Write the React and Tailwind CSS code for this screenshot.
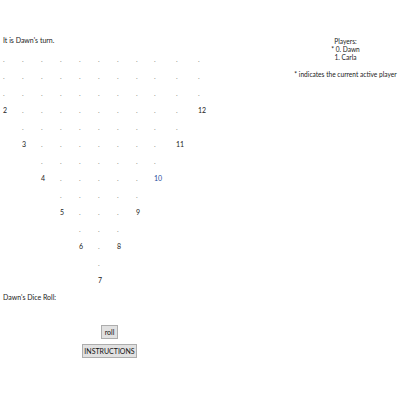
import React from "react";

const COLS = 11;
const rows = [
  { dots: [0, 10] },
  { dots: [0, 10] },
  { dots: [0, 10] },
  { left: [0, "2"], dots: [1, 9], right: [10, "12"] },
  { dots: [1, 9] },
  { left: [1, "3"], dots: [2, 8], right: [9, "11"] },
  { dots: [2, 8] },
  { left: [2, "4"], dots: [3, 7], right: [8, "10", true] },
  { dots: [3, 7] },
  { left: [3, "5"], dots: [4, 6], right: [7, "9"] },
  { dots: [4, 6] },
  { left: [4, "6"], dots: [5, 5], right: [6, "8"] },
  { dots: [5, 5] },
  { left: [5, "7"] },
];

function Row({ r }) {
  const cells = [];
  for (let c = 0; c < COLS; c++) {
    let content = null;
    if (r.left && r.left[0] === c) {
      content = <span className="text-[#222]">{r.left[1]}</span>;
    } else if (r.right && r.right[0] === c) {
      content = (
        <span className={r.right[2] ? "text-[#1f4e9c]" : "text-[#222]"}>
          {r.right[1]}
        </span>
      );
    } else if (r.dots && c >= r.dots[0] && c <= r.dots[1]) {
      content = <span className="text-[#888]">.</span>;
    }
    cells.push(
      <div key={c} className="h-[17px] flex items-center">
        {content}
      </div>
    );
  }
  return <>{cells}</>;
}

export default function App() {
  return (
    <div className="flex bg-white font-['Lato',sans-serif] text-[7px] leading-[8px] text-[#222] w-[400px] h-[400px]">
      <div className="w-[215px] pl-[3px] pt-[36px]">
        <div>It is Dawn's turn.</div>
        <div className="mt-[6px] grid grid-cols-[19px_19px_19px_19px_19px_19px_19px_18px_22px_22px_16px]">
          {rows.map((r, i) => (
            <Row key={i} r={r} />
          ))}
        </div>
        <div className="mt-[5px]">Dawn's Dice Roll:</div>
        <div className="mt-[24px] flex flex-col items-center gap-[5px] pl-[1px]">
          <button className="h-[14px] px-[3px] bg-[#e1e1e1] border border-[#adadad] text-[7px] leading-[8px] text-[#111]">
            roll
          </button>
          <button className="h-[14px] px-[1px] bg-[#e1e1e1] border border-[#adadad] text-[7px] leading-[8px] text-[#111]">
            INSTRUCTIONS
          </button>
        </div>
      </div>
      <div className="flex-1 pt-[37px] flex justify-center pl-[76px] text-[6.6px]">
        <div className="text-center whitespace-nowrap">
          <div>Players:</div>
          <div>* 0. Dawn</div>
          <div>1. Carla</div>
          <div className="mt-[9px]">* indicates the current active player</div>
        </div>
      </div>
    </div>
  );
}
